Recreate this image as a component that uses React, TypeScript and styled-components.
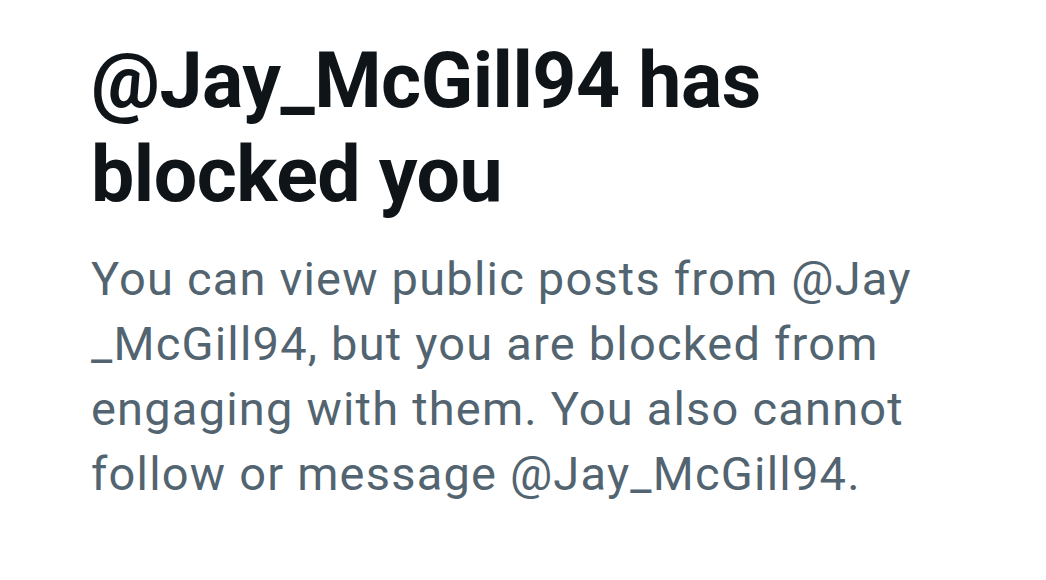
import React, {FC} from 'react';
import styled, {createGlobalStyle} from 'styled-components';

const GlobalStyle = createGlobalStyle`
    html, body {
        margin: 0;
        padding: 0;
        background: #ffffff;
    }
    body {
        font-family: Roboto, "Noto Sans", "Liberation Sans", sans-serif;
    }
`;

const Page = styled.div`
    width: 1046px;
    height: 580px;
    box-sizing: border-box;
    padding: 34px 0 0 91px;
    display: flex;
    flex-direction: column;
    overflow: hidden;
`;

const Title = styled.h1`
    margin: 0;
    font-size: 77px;
    line-height: 94px;
    letter-spacing: -0.5px;
    font-weight: 700;
    color: #0f1419;
`;

const Body = styled.p`
    margin: 24px 0 0;
    font-size: 47px;
    line-height: 65px;
    letter-spacing: 1.2px;
    font-weight: 400;
    color: #536471;
`;

const Line = styled.span`
    display: block;
    white-space: nowrap;
`;

const titleLines = ['@Jay_McGill94 has', 'blocked you'];

const bodyLines = [
    'You can view public posts from @Jay',
    '_McGill94, but you are blocked from',
    'engaging with them. You also cannot',
    'follow or message @Jay_McGill94.',
];

const App: FC = () => {
    return (
        <>
            <GlobalStyle />
            <Page>
                <Title>
                    {titleLines.map((l) => (
                        <Line key={l}>{l}</Line>
                    ))}
                </Title>
                <Body>
                    {bodyLines.map((l) => (
                        <Line key={l}>{l}</Line>
                    ))}
                </Body>
            </Page>
        </>
    );
};

export default App;
